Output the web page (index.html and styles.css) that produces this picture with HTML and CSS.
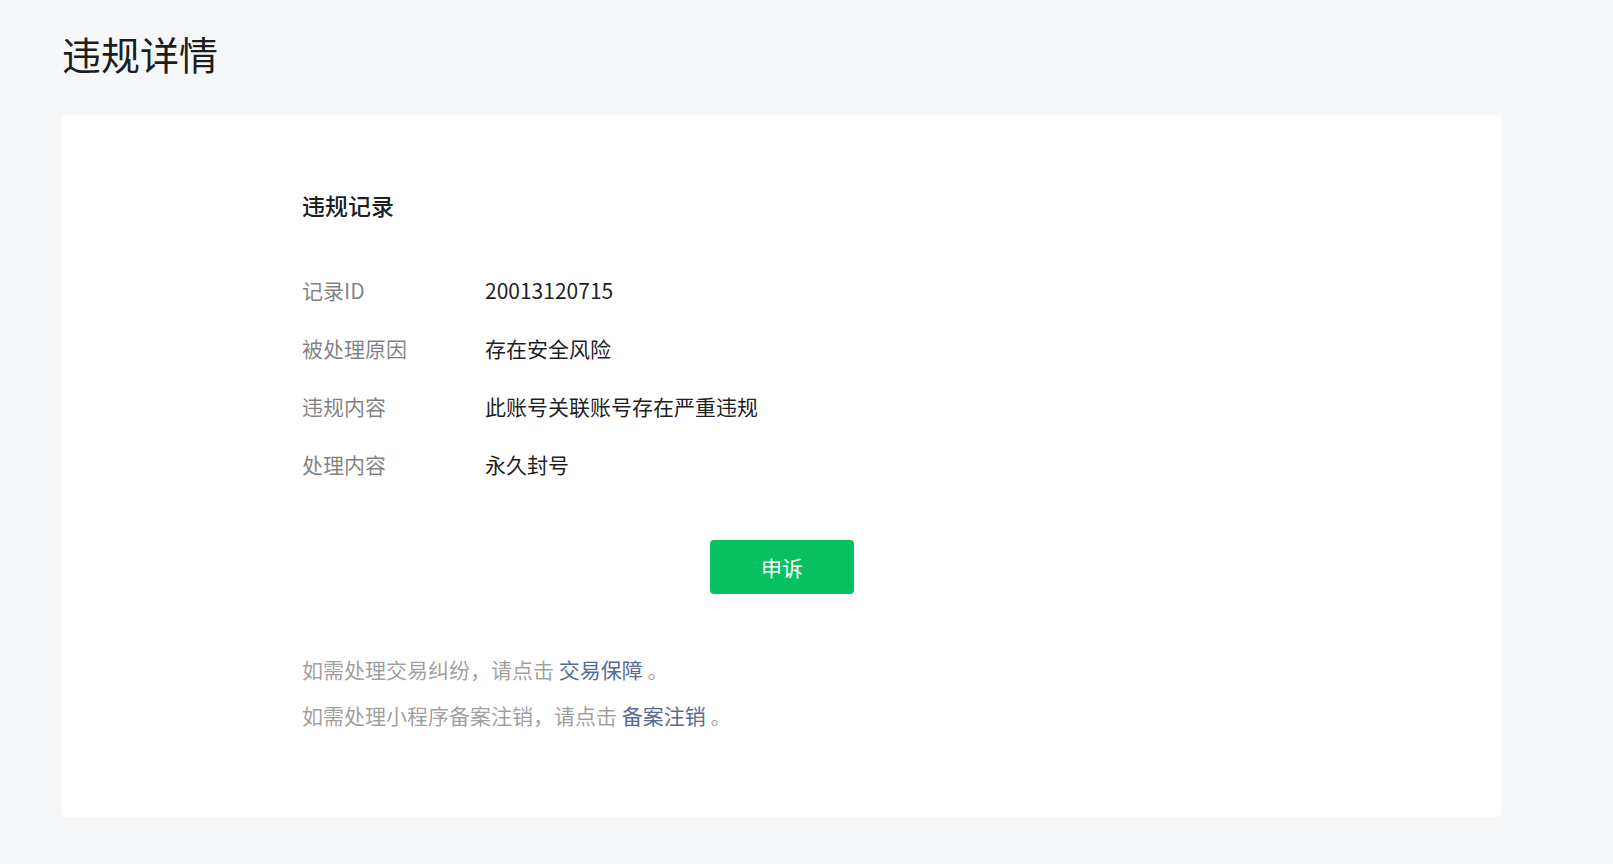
FILE: index.html
```html
<!DOCTYPE html>
<html lang="zh-CN">
<head>
    <meta charset="UTF-8">
    <title>违规详情</title>
    <link rel="stylesheet" href="styles.css">
</head>
<body>
    <h1 class="page-title">违规详情</h1>

    <div class="card">
        <div class="card-inner">
            <h2 class="section-title">违规记录</h2>

            <div class="record-list">
                <div class="record-row">
                    <span class="record-label">记录ID</span>
                    <span class="record-value">20013120715</span>
                </div>
                <div class="record-row">
                    <span class="record-label">被处理原因</span>
                    <span class="record-value">存在安全风险</span>
                </div>
                <div class="record-row">
                    <span class="record-label">违规内容</span>
                    <span class="record-value">此账号关联账号存在严重违规</span>
                </div>
                <div class="record-row">
                    <span class="record-label">处理内容</span>
                    <span class="record-value">永久封号</span>
                </div>
            </div>

            <div class="action">
                <button class="appeal-button">申诉</button>
            </div>

            <div class="tips">
                <p>如需处理交易纠纷，请点击 <a href="#">交易保障</a> 。</p>
                <p>如需处理小程序备案注销，请点击 <a href="#">备案注销</a> 。</p>
            </div>
        </div>
    </div>
</body>
</html>
```

FILE: styles.css
```css
:root {
    --bg-color: #f6f7f9;
    --card-bg: #ffffff;
    --text-color: rgba(0, 0, 0, 0.9);
    --label-color: rgba(0, 0, 0, 0.5);
    --tip-color: rgba(0, 0, 0, 0.4);
    --link-color: #576b95;
    --primary-color: #07c160;
}

body {
    margin: 0;
    padding: 0;
    background-color: var(--bg-color);
    color: var(--text-color);
    font-family: "Noto Sans CJK SC", "Noto Sans", sans-serif;
}

.page-title {
    margin: 25px 0 0 62px;
    font-size: 39px;
    line-height: 56px;
    font-weight: 400;
}

.card {
    margin: 34px 0 0 62px;
    width: 1440px;
    height: 702px;
    box-sizing: border-box;
    background-color: var(--card-bg);
    border-radius: 5px;
    padding: 74px 240px 0;
}

.card-inner {
    display: flex;
    flex-direction: column;
}

.section-title {
    margin: 0;
    font-size: 23px;
    line-height: 32px;
    font-weight: 500;
}

.record-list {
    margin-top: 54px;
    display: flex;
    flex-direction: column;
    gap: 28px;
}

.record-row {
    display: flex;
    font-size: 21px;
    line-height: 30px;
}

.record-label {
    width: 183px;
    color: var(--label-color);
}

.action {
    margin-top: 61px;
    display: flex;
    justify-content: center;
}

.appeal-button {
    width: 144px;
    height: 54px;
    border: none;
    border-radius: 4px;
    background-color: var(--primary-color);
    color: #ffffff;
    font-family: inherit;
    font-size: 21px;
    font-weight: 400;
    cursor: pointer;
}

.tips {
    margin-top: 60px;
    display: flex;
    flex-direction: column;
    gap: 16px;
}

.tips p {
    margin: 0;
    font-size: 21px;
    line-height: 30px;
    color: var(--tip-color);
}

.tips a {
    color: var(--link-color);
    text-decoration: none;
}
```
